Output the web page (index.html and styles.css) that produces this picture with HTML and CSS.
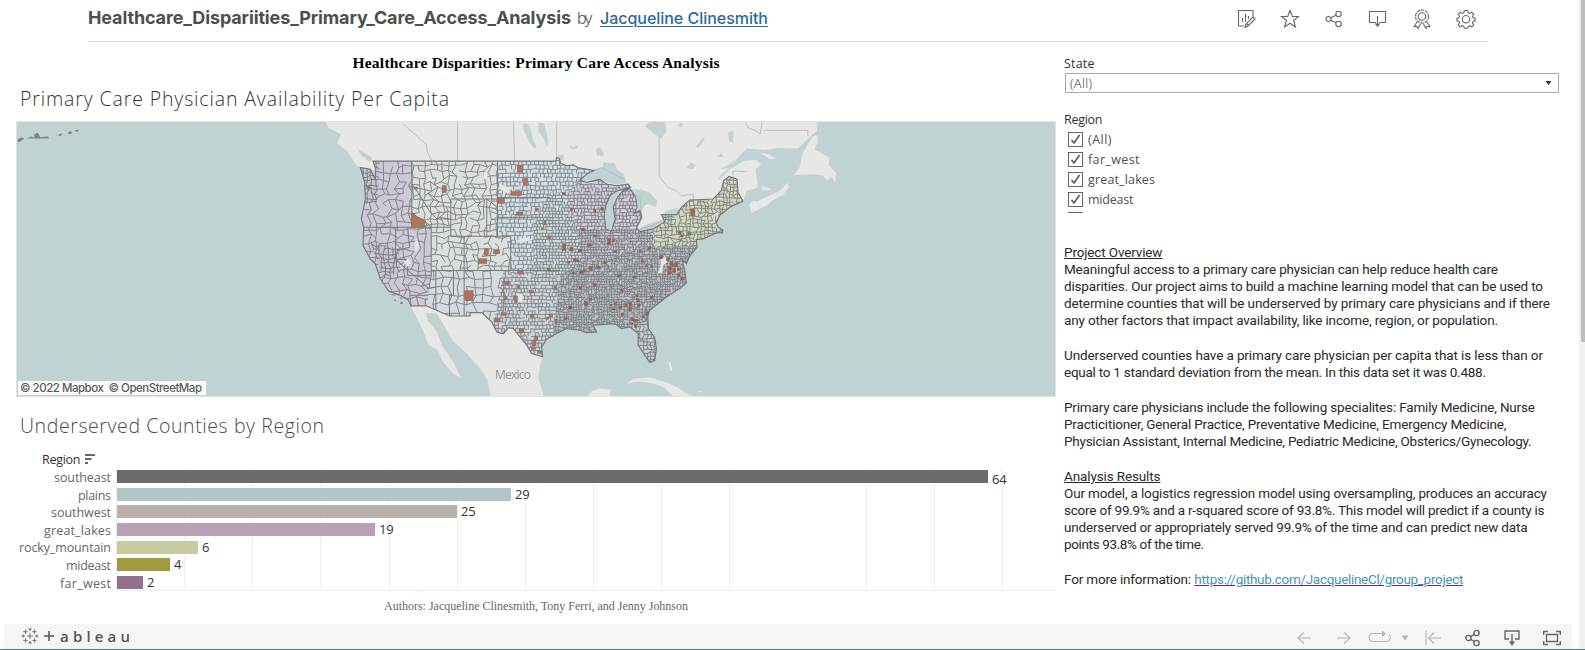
FILE: index.html
```html
<!DOCTYPE html>
<html lang="en">
<head>
<meta charset="utf-8">
<title>Healthcare Disparities: Primary Care Access Analysis</title>
<link rel="stylesheet" href="styles.css">
</head>
<body>
<div class="page">
  <header class="topbar">
    <div class="heading">
      <h1 data-fit="483">Healthcare_Dispariities_Primary_Care_Access_Analysis</h1>
      <span class="by" data-fit="16">by</span>
      <a class="author" href="#" data-fit="168">Jacqueline Clinesmith</a>
    </div>
    <nav class="actions">
      <svg viewBox="0 0 20 20"><path d="M8 17H2.5V1.500H17V8M6.500 9v4M9.500 5v8M12.500 7v3M9 18.500l1-3.500 7-7 2 2-7 7zM10.500 14.500l2 2"/></svg>
      <svg viewBox="0 0 20 20"><path d="M10 1.500l2.300 6H18.500l-4.900 4 1.800 6.500-5.400-3.800L4.600 18l1.800-6.500-4.900-4h6.200z"/></svg>
      <svg viewBox="0 0 20 20"><circle cx="4.500" cy="10" r="2.500"/><circle cx="14.500" cy="5" r="2.700"/><circle cx="14.500" cy="15" r="2.700"/><path d="M6.800 8.800L12 6.300M6.800 11.200L12 13.700"/></svg>
      <svg viewBox="0 0 20 20"><path d="M8 13.500H1.500v-11h16v11h-6M9.500 7v9"/><path class="solid" d="M6.500 14.500h6l-3 3.500z"/></svg>
      <svg viewBox="0 0 20 20"><circle cx="10" cy="7.500" r="3.700"/><circle cx="10" cy="7.500" r="6.500" stroke-dasharray="3.200 .9"/><path d="M5.500 12.500L2 17.500l3-.2 1 2.200 2.800-5M14.500 12.500l3.500 5-3-.2-1 2.200-2.800-5"/></svg>
      <svg viewBox="0 0 20 20"><path d="M8.300 1.500h3.400l.5 2.300 1.500.6 2-1.200 2 2-1.200 2 .6 1.500 2 .5v2.600l-2 .6-.6 1.500 1.200 2-2 2-2-1.200-1.500.6-.5 2H8.300l-.5-2-1.500-.6-2 1.200-2-2 1.200-2-.6-1.500-2-.6V9.200l2-.5.6-1.500-1.200-2 2-2 2 1.200 1.500-.6z"/><circle cx="10" cy="10.200" r="3.700"/></svg>
    </nav>
  </header>

  <main class="dashboard">
    <section class="charts">
      <h2 class="dash-title"><span data-fit="367">Healthcare Disparities: Primary Care Access Analysis</span></h2>
      <h3 class="sheet-title map-title"><span data-fit="429">Primary Care Physician Availability Per Capita</span></h3>
      <div class="map">
        <svg class="map-svg" viewBox="-912 18 3120 825" preserveAspectRatio="none">
          <defs>
            <clipPath id="usa"><path id="usa-shape" d="M158 136H708L710 125L718 128L722 142L740 150L760 147L775 156L800 160L822 164L800 175L780 193L800 200L840 190L860 205L890 210L925 205L932 215L890 226L872 238L858 268L853 300L858 340L875 346L886 310L880 275L893 245L908 226L930 218L948 245L952 275L945 292L960 284L966 305L950 338L962 348L1000 340L1035 318L1025 297L1072 297L1085 275L1110 253L1180 250L1205 225L1212 195L1228 182L1252 190L1255 230L1270 256L1230 275L1200 300L1190 322L1196 335L1210 343L1208 352L1190 352L1150 370L1130 372L1132 395L1110 422L1100 445L1088 432L1096 472L1100 502L1085 516L1040 545L990 585L984 600L986 640L1005 668L1010 700L1005 736L990 742L975 720L955 690L955 655L930 635L905 640L885 625L820 630L830 650L800 652L780 645L740 640L710 655L680 672L665 695L668 725L635 715L620 690L600 665L580 640L565 637L550 656L530 650L515 620L485 592H450V602H388L320 572H272L265 555L240 540L205 527L180 490L165 445L150 430L128 390L130 335L123 310L135 250L133 200L120 155L150 160L165 190L166 160Z"/></clipPath>
            <clipPath id="c-west"><path d="M100 130H275V335H333V480L322 600H100Z"/></clipPath>
            <clipPath id="c-coast"><path d="M100 130H180L170 260L100 270ZM150 380L235 400L240 470L190 490Z"/></clipPath>
            <clipPath id="c-rocky"><path d="M275 130H532V362H572V465H333V335H275Z"/></clipPath>
            <clipPath id="c-plains"><path d="M532 110H830V193L750 230H690L660 290L640 320V480H572V362H532Z"/></clipPath>
            <clipPath id="c-corn"><path d="M690 230H760L765 300L790 400L800 480H640V320L660 290Z"/></clipPath>
            <clipPath id="c-sw"><path d="M333 465H551V670H310Z"/></clipPath>
            <clipPath id="c-texas"><path d="M551 465H720V740H500Z"/></clipPath>
            <clipPath id="c-lakes"><path d="M750 230L780 185H1000V340H768Z"/></clipPath>
            <clipPath id="c-ohio"><path d="M768 340H1000V392L960 410L900 420L790 440Z"/></clipPath>
            <clipPath id="c-east"><path d="M1000 170H1290V400L1130 420L1110 392L1000 392Z"/></clipPath>
            <clipPath id="c-south"><path d="M720 480L790 440L900 420L960 400L1000 392H1140V630H930L900 650H700Z"/></clipPath>
            <clipPath id="c-florida"><path d="M930 630H1040V760H930Z"/></clipPath>
          </defs>
          <g class="land">
            <path d="M15 18L25 36L38 42L62 55L50 82L80 105L108 148L145 168L160 160L200 240L900 420L1000 345L1180 300L1270 256L1282 225L1315 215L1308 160L1325 145L1310 132L1275 135L1230 160L1195 195L1202 180L1235 150L1280 98L1335 102L1380 96L1435 98L1475 60L1492 45V18Z"/>
            <path d="M272 572L290 610L308 645L325 690L350 702L370 742L398 775L422 788L402 745L384 718L365 690L350 650L322 615L318 592L350 595L365 620L400 680L440 715L480 760L502 795L512 843H672L655 790L660 750L668 725L620 600L500 560Z"/>
            <path d="M1288 268L1300 255L1312 258L1330 248L1355 238L1380 225L1404 200L1408 215L1390 238L1362 252L1340 270L1296 292Z"/>
            <path d="M1480 60L1495 58V80L1485 100L1530 125L1528 150L1550 170L1548 202L1535 182L1525 195L1510 180L1490 175L1422 178L1440 155L1450 110Z"/>
            <path d="M922 805L940 790L990 787L1035 800L1070 815L1100 835L1120 843H1060L1030 815L990 803L955 800ZM804 843L812 830L840 820L875 824L868 843ZM1320 110L1350 115L1370 130L1350 130ZM1046 742L1052 740L1058 768H1052ZM1138 828H1146V832H1138ZM1325 210L1350 218L1358 222L1330 224Z"/>
          </g>
          <g class="water">
            <path d="M772 196L790 172L825 160L850 152L850 140L885 142L890 160L912 175L920 202L890 207L860 200L840 188L800 200ZM925 220L965 222L990 230L1012 255L1010 275L985 265L972 270L965 290L955 284L950 245ZM866 240L895 226L905 232L885 262V320L868 345L855 330L858 268ZM952 342L985 325L1040 308L1000 338L962 350ZM1024 300L1040 285L1075 277L1085 285L1070 298Z"/>
            <path d="M608 22L625 25L635 50L640 75L650 90L645 100L628 80L612 45ZM655 20L672 22L680 50L685 80L680 95L672 70L655 45ZM748 88L760 95L775 85L772 98L755 100ZM975 30L990 18L1035 18L1040 45L1025 70L1000 50ZM712 118L730 115L732 130L720 135ZM828 100L840 95L852 110L850 122L832 118ZM1130 90L1152 63L1155 70L1135 98ZM1100 155L1115 140L1128 150L1118 160ZM1190 122L1205 112L1212 125ZM1225 50L1242 45L1240 80L1228 75ZM110 98L130 110L155 125L150 140L125 120ZM1075 28L1085 18L1090 28L1080 35Z"/>
            <path d="M1200 160L1230 145L1245 130L1235 155Z"/>
          </g>
          <path class="border" d="M246 22L290 60L318 85L322 110L350 165M412 18V136M580 18L584 136M710 18V125M1018 65V180L1045 215L1070 225L1085 240L1120 235L1122 250M1278 18L1285 35L1310 45L1322 55L1328 18M1333 43H1465V60M1240 185V165L1280 168M485 592L515 620M822 164L845 156L912 190M925 220L960 245L966 300M960 342L1028 318L1080 296"/>
          <g clip-path="url(#usa)">
            <rect class="f-south" x="100" y="100" width="1200" height="680"/>
            <g id="counties"></g>
            <path class="edge" d="M275 136V335M123 335H333M333 335V480L326 520L226 432V335M333 335H392M392 250V362M392 362H572M392 250H532M532 136V362M572 362V465M333 465H720M432 362V602M347 465V590M551 490V590M532 245H690M532 305H660"/>
            <path class="edge" d="M275 290L290 303L313 315L333 335M275 205L300 240L330 290L350 310H392M262 480H333M226 432H262V480M400 465V540H388V602M320 520L347 515M262 335L268 395L230 405M268 540H325M532 275L500 250V362"/>
          </g>
          <use class="outline" href="#usa-shape"/>
          <path class="gaps" d="M288 365L297 392L286 412L283 385ZM250 440L264 428L272 445L262 453ZM538 205L575 218L560 232L540 220ZM590 375L615 365L640 372L600 382ZM590 535H608V560H590ZM1025 430L1040 422L1042 440L1030 450L1028 470L1012 475L1022 455ZM490 168H502V190H490Z"/>
          <g id="underserved"></g>
          <g class="isles"><path d="M-912 72L-900 64L-890 68L-906 80ZM-884 68L-868 62L-860 66V56L-850 50L-842 64L-818 62L-816 68H-880ZM-792 58L-776 52L-780 60ZM-758 48L-748 46V54H-758ZM-740 44L-726 40L-730 48ZM205 535L228 538L222 541ZM238 545L248 548L242 552ZM222 553H227V557H222ZM240 560H247V566H240Z"/></g>
        </svg>
        <span class="mexico"><span data-fit="36">Mexico</span></span>
        <span class="credit"><span data-fit="182">© 2022 Mapbox&nbsp; © OpenStreetMap</span></span>
      </div>

      <h3 class="sheet-title bar-title"><span data-fit="304">Underserved Counties by Region</span></h3>
      <div class="field">
        <span data-fit="38.500">Region</span>
        <svg viewBox="0 0 10 10" class="sort"><path d="M0 1h10M0 5h6.500M0 9h3"/></svg>
      </div>
      <div class="bars">
        <div class="names">
          <span><b data-fit="57">southeast</b></span><span><b data-fit="33">plains</b></span><span><b data-fit="60">southwest</b></span><span><b data-fit="67">great_lakes</b></span><span><b data-fit="92">rocky_mountain</b></span><span><b data-fit="45">mideast</b></span><span><b data-fit="51">far_west</b></span>
        </div>
        <div class="plot">
          <div class="row"><i class="bar southeast" style="width:871px"></i><span class="low">64</span></div>
          <div class="row"><i class="bar plains" style="width:394px"></i><span>29</span></div>
          <div class="row"><i class="bar southwest" style="width:340px"></i><span>25</span></div>
          <div class="row"><i class="bar great-lakes" style="width:258px"></i><span>19</span></div>
          <div class="row"><i class="bar rocky" style="width:81px"></i><span>6</span></div>
          <div class="row"><i class="bar mideast" style="width:53px"></i><span>4</span></div>
          <div class="row"><i class="bar far-west" style="width:26px"></i><span>2</span></div>
        </div>
      </div>
      <p class="authors"><span data-fit="304">Authors: Jacqueline Clinesmith, Tony Ferri, and Jenny Johnson</span></p>
    </section>

    <aside class="side">
      <div class="label state-label"><span data-fit="30.5">State</span></div>
      <div class="select"><span data-fit="22">(All)</span><svg viewBox="0 0 6 4"><path d="M0 0h6L3 4z"/></svg></div>
      <div class="label region-label"><span data-fit="38.500">Region</span></div>
      <ul class="checks">
        <li><i><svg viewBox="0 0 15 15"><path d="M3.500 8l2.500 3 5.500-8"/></svg></i><span data-fit="23.500">(All)</span></li>
        <li><i><svg viewBox="0 0 15 15"><path d="M3.500 8l2.500 3 5.500-8"/></svg></i><span data-fit="51.500">far_west</span></li>
        <li><i><svg viewBox="0 0 15 15"><path d="M3.500 8l2.500 3 5.500-8"/></svg></i><span data-fit="67">great_lakes</span></li>
        <li><i><svg viewBox="0 0 15 15"><path d="M3.500 8l2.500 3 5.500-8"/></svg></i><span data-fit="45.500">mideast</span></li>
        <li><i></i></li>
      </ul>
      <article class="notes">
        <p><u data-fit="98.500">Project Overview</u><br><span data-fit="434">Meaningful access to a primary care physician can help reduce health care</span><br><span data-fit="479">disparities. Our project aims to build a machine learning model that can be used to</span><br><span data-fit="486">determine counties that will be underserved by primary care physicians and if there</span><br><span data-fit="434">any other factors that impact availability, like income, region, or population.</span></p>
        <p><span data-fit="479">Underserved counties have a primary care physician per capita that is less than or</span><br><span data-fit="422">equal to 1 standard deviation from the mean. In this data set it was 0.488.</span></p>
        <p><span data-fit="471">Primary care physicians include the following specialites: Family Medicine, Nurse</span><br><span data-fit="442.500">Practicitioner, General Practice, Preventative Medicine, Emergency Medicine,</span><br><span data-fit="467.500">Physician Assistant, Internal Medicine, Pediatric Medicine, Obsterics/Gynecology.</span></p>
        <p><u data-fit="96.500">Analysis Results</u><br><span data-fit="483">Our model, a logistics regression model using oversampling, produces an accuracy</span><br><span data-fit="480.500">score of 99.9% and a r-squared score of 93.8%. This model will predict if a county is</span><br><span data-fit="463.500">underserved or appropriately served 99.9% of the time and can predict new data</span><br><span data-fit="140">points 93.8% of the time.</span></p>
        <p><span data-fit="127">For more information:</span> <a href="#" data-fit="269">https://github.com/JacquelineCl/group_project</a></p>
      </article>
    </aside>
  </main>

  <footer class="toolbar">
    <div class="brand">
      <svg viewBox="0 0 18 18"><path d="M9 6v6M6 9h6M9 .500v3.500M7.300 2.200h3.400M9 14v3.500M7.300 15.800h3.400M2.200 7.300v3.400M.500 9h3.500M15.800 7.300v3.400M14 9h3.500M4.500 2.500v4.400M2.300 4.700h4.400M13.500 2.500v4.400M11.300 4.700h4.400M4.500 11.200v4.400M2.300 13.400h4.400M13.500 11.200v4.400M11.300 13.400h4.400"/></svg>
      <svg class="cross" viewBox="0 0 10 10"><path d="M5 0v10M0 5h10"/></svg>
      <span data-fit="70">ableau</span>
    </div>
    <div class="tools">
      <svg class="off" width="14" height="18" viewBox="0 0 14 18"><path d="M14 9H1M7 3.500L1 9l6 5.500"/></svg>
      <svg class="off r" width="14" height="18" viewBox="0 0 14 18"><path d="M0 9h13M7 3.500L13 9l-6 5.500"/></svg>
      <svg class="off loop" width="24" height="18" viewBox="0 0 24 18"><path d="M14 4.500H5a4 4 0 0 0 0 8h14a4 4 0 0 0 2-7"/><path class="solid" d="M14 1.500v6.500l4-3.300z"/></svg>
      <svg class="off caret" width="8" height="18" viewBox="0 0 8 18"><path class="solid" d="M.500 6.500h7L4 11.500z"/></svg>
      <svg class="off reset" width="16" height="18" viewBox="0 0 16 18"><path d="M1 1.500v15M16 9H3.500M9 3.500L3.500 9 9 14.500"/></svg>
      <svg class="share" width="16" height="18" viewBox="0 0 16 18"><circle cx="3.500" cy="9" r="2.600"/><circle cx="11.500" cy="4" r="2.600"/><circle cx="11.500" cy="14" r="2.600"/><path d="M5.700 7.700l3.500-2.200M5.700 10.300l3.500 2.200"/></svg>
      <svg class="down" width="16" height="18" viewBox="0 0 16 18"><path d="M5 10H1V2h14v8h-4M8 5v9"/><path class="solid" d="M5 12.500h6L8 17z"/></svg>
      <svg class="full" width="18" height="18" viewBox="0 0 18 18"><path d="M3.500 5.500h11v7h-11zM.700 6V2.500H5M13 2.500h4.300V6M17.300 12v3.500H13M5 15.500H.700V12"/></svg>
    </div>
  </footer>
  <div class="scrollbar"><i></i></div>
</div>
<script src="script.js"></script>
</body>
</html>
```
FILE: styles.css
```css
* { box-sizing: border-box; }
body { margin: 0; background: #fff; color: #333; font-family: "Open Sans", "Noto Sans", sans-serif; overflow: hidden; }
h1, h2, h3, p, ul { margin: 0; padding: 0; font-weight: normal; }
[data-fit] { display: inline-block; white-space: nowrap; }
.page { position: relative; width: 1585px; height: 650px; overflow: hidden; display: flex; flex-direction: column; border-bottom: 1px solid #3f8386; }

.topbar { width: 1400px; height: 42px; flex: none; margin-left: 88px; border-bottom: 1px solid #dcdcdc; display: flex; justify-content: space-between; align-items: flex-start; }
.heading { display: flex; align-items: baseline; line-height: 36px; font-family: Inter, sans-serif; }
.heading h1 { font-size: 18px; font-weight: 700; color: #4e4e4e; }
.by { margin-left: 6px; font-size: 16px; font-weight: 300; color: #555; }
.author { margin-left: 7px; font-size: 16px; font-weight: 500; color: #2a6a9c; text-decoration: underline; text-underline-offset: 2px; text-decoration-thickness: 1px; }
.actions { display: flex; gap: 24px; padding: 8.5px 12px 0 0; }
.actions svg { width: 20px; height: 20px; }
.actions svg, .tools svg { fill: none; stroke: #666; stroke-width: 1.1; }
.actions .solid, .tools .solid { fill: #666; stroke: none; }

.dashboard { display: flex; height: 582px; flex: none; }
.charts { width: 1040px; margin-left: 16px; flex: none; }
.dash-title { height: 38px; padding-top: 9px; text-align: center; font: bold 15.5px/24px "Liberation Serif", serif; color: #000; }
.sheet-title { font-weight: 300; font-size: 19.5px; line-height: 28px; padding-left: 4px; color: #333; }
.map-title { height: 41px; padding-top: 5px; }
.map { position: relative; height: 276px; border: 1px solid #e2e2e2; background: #c0d2d1; overflow: hidden; }
.map-svg { display: block; width: 1038px; height: 274px; }
.land { fill: #e7e7e6; }
.water { fill: #c0d2d1; }
.border { fill: none; stroke: #b3b6b6; stroke-width: 2.5; }
.f-south { fill: #b9bfc2; }
.edge { fill: none; stroke: #777b7c; stroke-width: 3; }
.outline { fill: none; stroke: #737778; stroke-width: 3.5; }
.gaps { fill: #e7e7e6; }
.isles { fill: #7c8586; }
.mexico { position: absolute; left: 478px; top: 245px; font-size: 12px; line-height: 16px; color: #8c8c8c; text-shadow: 0 0 2px #fff; }
.credit { position: absolute; left: 1px; bottom: 1px; width: 188px; height: 14px; padding-left: 2px; background: #fafafa; font: 500 11.5px/14px Inter, sans-serif; color: #5c5c5c; }
.bar-title { height: 56px; padding-top: 15px; color: #4a4a4a; }
.field { display: flex; height: 15px; padding-left: 26px; gap: 5px; font-size: 12.5px; line-height: 14px; }
.sort { width: 10px; height: 10px; margin-top: 1px; stroke: #666; stroke-width: 2; }
.bars { display: flex; height: 123px; }
.names { width: 100px; padding: 2px 5px 0 0; display: flex; flex-direction: column; align-items: flex-end; font-size: 12.5px; color: #666; }
.names span { height: 17.6px; flex: none; line-height: 15px; }
.names b { font-weight: 400; }
.plot { flex: 1; padding: 2px 0 0 1px; border-bottom: 1px solid #ededed; border-left: 1px solid #ededed; background: repeating-linear-gradient(to right, transparent 0 67.150px, #efefef 67.150px 68.150px) 0 0 / 887px 100% no-repeat; }
.row { display: flex; height: 17.66px; font-size: 13px; line-height: 13px; color: #333; }
.row span { margin-left: 4px; letter-spacing: -.3px; }
.row .low { padding-top: 3px; }
.bar { height: 13px; margin-left: -1px; }
.southeast { background: #6b6b6b; }
.plains { background: #b2c6c8; }
.southwest { background: #bab0ac; }
.great-lakes { background: #b9a0b4; }
.rocky { background: #c8caa0; }
.bar.mideast { background: #9f9b3f; }
.far-west { background: #92708e; }
.authors { padding-top: 5px; padding-left: 368px; font: 12px/20px "Liberation Serif", serif; color: #666; }

.side { margin-left: 8px; width: 500px; }
.label { font-size: 12.5px; line-height: 16px; height: 16px; }
.state-label { margin-top: 14px; }
.select { display: flex; justify-content: space-between; align-items: center; width: 494px; height: 20px; margin: 1px 0 0 1px; padding: 0 6px 0 4px; border: 1px solid #aaa; font-size: 13px; line-height: 16px; color: #333; font-weight: 300; }
.select svg { width: 7px; height: 4px; fill: #333; }
.region-label { margin-top: 19px; }
.checks { list-style: none; height: 85px; padding: 4px 0 0 4px; overflow: hidden; font-size: 12.5px; font-weight: 400; color: #505050; }
.checks li { display: flex; gap: 5px; height: 20px; line-height: 15px; }
.checks i { width: 15px; height: 15px; border: 1px solid #666; }
.checks svg { display: block; width: 15px; height: 15px; margin: -1px; fill: none; stroke: #555; stroke-width: 1.5; }
.notes { padding-top: 31px; font: 300 13.5px/17px Roboto, sans-serif; color: #2a2a2a; }
.notes p { margin-bottom: 18px; white-space: nowrap; }
.notes p > * { vertical-align: top; }
.notes a { color: #4695b5; text-decoration-color: #5b2a8c; }

.toolbar { display: flex; justify-content: space-between; align-items: center; width: 1568px; height: 25px; flex: none; margin-left: 4px; background: #f5f5f5; }
.brand { display: flex; align-items: center; padding-left: 17px; padding-bottom: 1px; }
.brand svg { width: 18px; height: 18px; stroke: #777; stroke-width: 1; fill: none; }
.brand .cross { width: 10px; height: 10px; margin: 0 6px 0 5px; stroke: #555; stroke-width: 1.5; }
.brand span { font: 600 15px/18px "Open Sans", sans-serif; color: #555; }
.tools { display: flex; align-items: center; padding: 2px 11px 0 0; }
.tools .off { stroke: #b4b4b4; }
.tools .off .solid { fill: #b4b4b4; }
.tools .r { margin-left: 26px; }
.tools .loop { margin-left: 17px; }
.tools .caret { margin-left: 9px; }
.tools .reset { margin-left: 16px; }
.tools .share { margin-left: 24px; }
.tools .down { margin-left: 23px; }
.tools .full { margin-left: 23px; }
.tools .share, .tools .down, .tools .full { stroke-width: 1.4; }
.scrollbar { position: absolute; top: 0; right: 0; width: 6px; height: 649px; background: #f0f0f0; }
.scrollbar i { display: block; width: 4px; height: 342px; margin-left: 2px; background: #bdbdbd; }
```
FILE: script.js
```js
document.querySelectorAll('[data-fit]').forEach(function (el) {
  var n = el.textContent.length;
  var w = el.getBoundingClientRect().width;
  el.style.letterSpacing = ((+el.dataset.fit - w) / (n - 1)) + 'px';
  el.style.marginRight = (-(+el.dataset.fit - w) / (n - 1)) + 'px';
});

var NS = 'http://www.w3.org/2000/svg';
var seed = 7;
function rnd() { seed = (seed * 16807) % 2147483647; return seed / 2147483647; }
function add(parent, name, attrs) {
  var e = document.createElementNS(NS, name);
  for (var k in attrs) e.setAttribute(k, attrs[k]);
  parent.appendChild(e);
  return e;
}

// County mesh: jittered cells of a size typical for each region.
// clip, x0, y0, x1, y1, cell, jitter, fill, line, width
var zones = [
  ['c-west', 100, 130, 340, 580, 21, 0.34, '#cdc9d7', '#7e7f86', 2.8],
  ['c-coast', 100, 130, 340, 580, 13, 0.4, '#c6c3cf', '#787980', 2.8],
  ['c-rocky', 275, 130, 575, 470, 18, 0.34, '#dbe0dc', '#7e8382', 2.8],
  ['c-sw', 310, 465, 555, 670, 25, 0.22, '#d5dadf', '#7c8186', 2.8],
  ['c-texas', 500, 465, 725, 740, 11, 0.16, '#cfd5d8', '#7a7f82', 2.7],
  ['c-plains', 532, 110, 830, 490, 12.5, 0.13, '#d3dfe5', '#7b8386', 2.7],
  ['c-corn', 630, 220, 810, 490, 9.5, 0.12, '#cfdade', '#777d80', 2.7],
  ['c-lakes', 750, 185, 1005, 345, 10.5, 0.16, '#d2ced9', '#7a7a82', 2.7],
  ['c-ohio', 760, 335, 1005, 445, 8.5, 0.2, '#c6c5cd', '#74767c', 2.7],
  ['c-east', 1000, 170, 1290, 425, 11, 0.36, '#d1d7c4', '#7b8078', 2.7],
  ['c-south', 700, 385, 1140, 660, 7.6, 0.34, '#bcc2c6', '#707477', 2.3],
  ['c-florida', 925, 625, 1045, 760, 11, 0.25, '#c6cdd2', '#74787b', 2.6]
];
var root = document.getElementById('counties');
zones.forEach(function (z) {
  var g = add(root, 'g', { 'clip-path': 'url(#' + z[0] + ')' });
  add(g, 'rect', { x: z[1], y: z[2], width: z[3] - z[1], height: z[4] - z[2], fill: z[7] });
  var s = z[5], d = '', pts = [], r, c;
  var rows = Math.ceil((z[4] - z[2]) / s) + 1, cols = Math.ceil((z[3] - z[1]) / s) + 1;
  for (r = 0; r <= rows; r++) {
    pts.push([]);
    for (c = 0; c <= cols; c++) {
      pts[r].push([(z[1] + (c + (r % 2) * 0.3 + (rnd() - 0.5) * 2 * z[6]) * s).toFixed(1),
                   (z[2] + (r + (rnd() - 0.5) * 2 * z[6]) * s).toFixed(1)]);
    }
  }
  var drop = s > 15 ? 0.22 : 0.1;
  for (r = 0; r < rows; r++) {
    for (c = 0; c < cols; c++) {
      var p = pts[r][c], q = pts[r][c + 1], t = pts[r + 1][c];
      if (rnd() > drop) d += 'M' + p + 'L' + q;
      if (rnd() > drop) d += z[6] < 0.2 ? 'M' + p + 'V' + t[1] : 'M' + p + 'L' + t;
    }
  }
  add(g, 'path', { d: d, fill: 'none', stroke: z[8], 'stroke-width': z[9] });
});

// Underserved counties: x, y, width, height.
var low = [
  [592,148,16,22],[611,187,12,20],[573,227,32,12],[533,248,20,15],[590,289,17,10],[366,210,12,20],[282,214,10,6],[141,213,8,5],
  [493,400,12,20],[521,402,18,13],[474,430,26,14],[434,526,25,30],[592,466,18,10],[554,499,14,9],[592,510,8,10],[583,542,9,19],
  [554,544,7,9],[522,610,18,10],[545,592,12,8],[598,640,12,13],[638,675,10,17],[634,695,9,8],[646,663,6,12],[655,708,8,6],
  [628,526,12,7],[632,598,8,10],[678,606,8,6],[688,598,10,8],[702,512,8,10],[682,458,9,6],[683,361,10,8],[672,316,6,12],
  [665,335,5,6],[646,277,9,7],[727,231,10,7],[751,277,8,8],[784,338,10,8],[728,385,9,20],[750,396,10,10],[776,401,9,9],
  [760,430,9,8],[770,433,8,6],[743,438,7,5],[780,466,10,8],[790,463,6,6],[757,470,8,5],[778,513,8,8],[794,558,9,12],
  [747,572,9,9],[705,613,6,8],[733,605,6,9],[821,281,7,8],[843,276,7,8],[803,386,12,6],[820,358,10,6],[863,370,8,18],
  [878,372,6,6],[883,405,6,6],[809,452,7,12],[832,452,9,6],[852,437,7,8],[820,504,8,10],[808,548,8,8],[795,562,9,7],
  [894,479,7,6],[870,567,6,5],[883,562,6,7],[877,578,8,6],[898,572,8,7],[915,565,6,8],[928,562,7,10],[927,575,8,12],
  [948,538,7,6],[951,550,7,9],[953,566,8,7],[905,593,6,9],[934,608,9,9],[932,622,7,6],[944,628,7,9],[945,613,8,5],
  [978,590,8,11],[968,600,6,7],[965,433,6,8],[958,404,6,6],[985,394,8,7],[976,448,6,5],[992,450,6,6],[1020,420,8,10],
  [1040,427,8,9],[1052,440,7,9],[1045,453,10,12],[1058,447,7,7],[1060,460,8,10],[1067,440,7,14],[1045,468,9,7],[1073,458,6,8],
  [1074,474,6,10],[1083,485,8,9],[1075,348,10,6],[1104,351,8,7],[1083,358,6,6],[992,543,8,7],[940,482,8,6],[903,523,7,5]
];
var u = document.getElementById('underserved');
low.forEach(function (b) {
  add(u, 'rect', { x: b[0], y: b[1], width: b[2], height: b[3], fill: b[0] > 720 ? '#9f5c48' : '#b26f5b', stroke: '#866a61', 'stroke-width': 1.5 });
});
add(u, 'path', { d: 'M275 290L290 303L313 315V334H275Z', fill: '#b37558', stroke: '#866a61', 'stroke-width': 2 });
add(u, 'path', { d: 'M1113 279H1123L1126 300H1114Z', fill: '#b76537', stroke: '#866a61', 'stroke-width': 2 });
```
